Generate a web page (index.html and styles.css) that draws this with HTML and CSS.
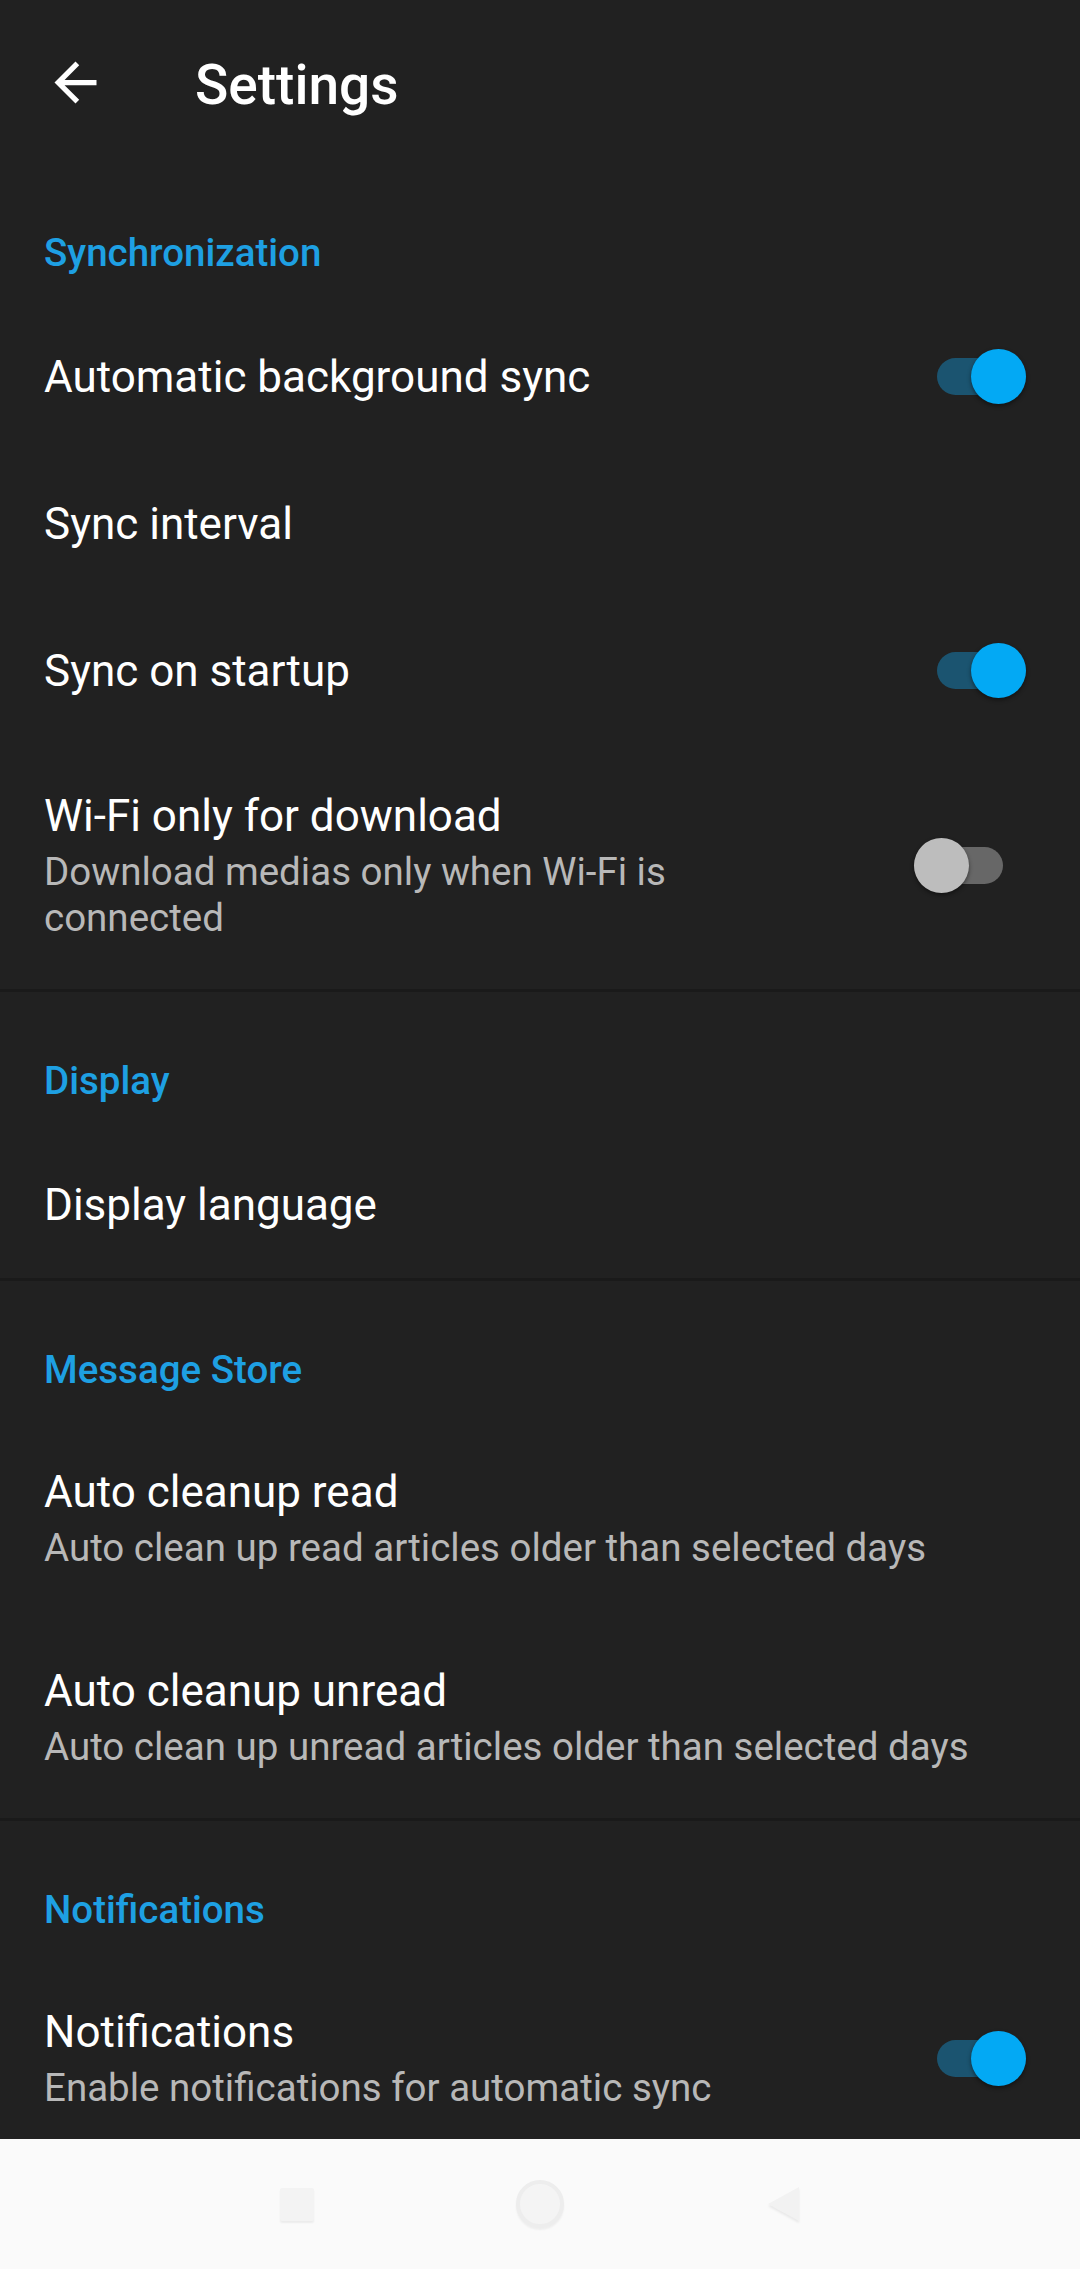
FILE: index.html
```html
<!DOCTYPE html>
<html lang="en">
<head>
  <meta charset="UTF-8" />
  <meta name="viewport" content="width=device-width, initial-scale=1.0"/>
  <title>Settings</title>
  <link rel="stylesheet" href="styles.css">
</head>
<body>

  <header class="toolbar">
    <svg class="back" viewBox="0 0 24 24"><path d="M20 11H7.83l5.59-5.59L12 4l-8 8 8 8 1.41-1.41L7.83 13H20v-2z"/></svg>
    <h1>Settings</h1>
  </header>

  <main>
    <section class="group">
      <h2 class="group-title">Synchronization</h2>
      <div class="pref">
        <div class="pref-text">
          <div class="pref-title">Automatic background sync</div>
        </div>
        <span class="switch on"></span>
      </div>
      <div class="pref">
        <div class="pref-text">
          <div class="pref-title">Sync interval</div>
        </div>
      </div>
      <div class="pref">
        <div class="pref-text">
          <div class="pref-title">Sync on startup</div>
        </div>
        <span class="switch on"></span>
      </div>
      <div class="pref two-line">
        <div class="pref-text">
          <div class="pref-title">Wi-Fi only for download</div>
          <div class="pref-summary">Download medias only when Wi-Fi is connected</div>
        </div>
        <span class="switch off"></span>
      </div>
    </section>

    <section class="group">
      <h2 class="group-title">Display</h2>
      <div class="pref">
        <div class="pref-text">
          <div class="pref-title">Display language</div>
        </div>
      </div>
    </section>

    <section class="group">
      <h2 class="group-title">Message Store</h2>
      <div class="pref two-line">
        <div class="pref-text">
          <div class="pref-title">Auto cleanup read</div>
          <div class="pref-summary">Auto clean up read articles older than selected days</div>
        </div>
      </div>
      <div class="pref two-line">
        <div class="pref-text">
          <div class="pref-title">Auto cleanup unread</div>
          <div class="pref-summary">Auto clean up unread articles older than selected days</div>
        </div>
      </div>
    </section>

    <section class="group">
      <h2 class="group-title">Notifications</h2>
      <div class="pref two-line">
        <div class="pref-text">
          <div class="pref-title">Notifications</div>
          <div class="pref-summary">Enable notifications for automatic sync</div>
        </div>
        <span class="switch on"></span>
      </div>
    </section>
  </main>

  <!-- system navigation bar -->
  <nav class="navbar">
    <span class="nav-square"></span>
    <span class="nav-circle"></span>
    <svg class="nav-back" viewBox="0 0 34 36"><path d="M33 1 L2 18 L33 35 Z"/></svg>
  </nav>

</body>
</html>
```

FILE: styles.css
```css
body {
  font-family: Roboto, "Noto Sans", sans-serif;
  background-color: #212121;
  color: #ffffff;
  margin: 0;
  padding: 0;
  height: 2269px;
  overflow: hidden;
}

.toolbar {
  height: 164px;
  display: flex;
  align-items: center;
  padding-left: 44px;
}

.back {
  width: 63px;
  height: 63px;
  fill: #ffffff;
}

.toolbar h1 {
  margin: 6px 0 0 88px;
  font-size: 55px;
  font-weight: 500;
  line-height: 64px;
}

.group + .group {
  border-top: 3px solid #1a1a1a;
}

.group-title {
  margin: 0;
  padding: 64px 44px 25px;
  font-size: 38.5px;
  font-weight: 500;
  line-height: 50px;
  color: #1ea0e3;
}

.pref {
  display: flex;
  align-items: center;
  min-height: 147px;
  padding: 0 54px 0 44px;
  box-sizing: border-box;
}

.pref.two-line {
  padding-top: 46px;
  padding-bottom: 48px;
}

.pref-text {
  flex: 1;
}

.pref-title {
  font-size: 44px;
  line-height: 52px;
}

.pref-summary {
  margin-top: 7px;
  font-size: 38.5px;
  line-height: 46px;
  color: #b8b8b8;
}

/* Switch */
.switch {
  position: relative;
  flex-shrink: 0;
  width: 89px;
  height: 37px;
  margin-left: 130px;
  border-radius: 19px;
}

.switch::after {
  content: "";
  position: absolute;
  top: -9px;
  width: 55px;
  height: 55px;
  border-radius: 50%;
  box-shadow: 0 2px 4px rgba(0, 0, 0, 0.45);
}

.switch.on {
  background-color: #1b5470;
}

.switch.on::after {
  right: 0;
  background-color: #03a9f4;
}

.switch.off {
  margin-right: 23px;
  background-color: #676767;
}

.switch.off::after {
  left: 0;
  background-color: #bdbdbd;
}

/* Navigation bar */
.navbar {
  position: fixed;
  left: 0;
  right: 0;
  bottom: 0;
  height: 130px;
  background-color: #fafafa;
  display: flex;
  align-items: center;
  justify-content: center;
  gap: 202px;
}

.nav-square {
  width: 34px;
  height: 33px;
  background-color: #f3f3f3;
  border-radius: 2px;
  box-shadow: 0 2px 2px rgba(0, 0, 0, 0.06);
}

.nav-circle {
  width: 40px;
  height: 40px;
  border-radius: 50%;
  border: 4px solid #ededed;
  background-color: #f4f4f4;
  box-shadow: 0 2px 2px rgba(0, 0, 0, 0.05);
}

.nav-back {
  width: 34px;
  height: 36px;
  fill: #f2f2f2;
  filter: drop-shadow(0 2px 1px rgba(0, 0, 0, 0.07));
}
```
